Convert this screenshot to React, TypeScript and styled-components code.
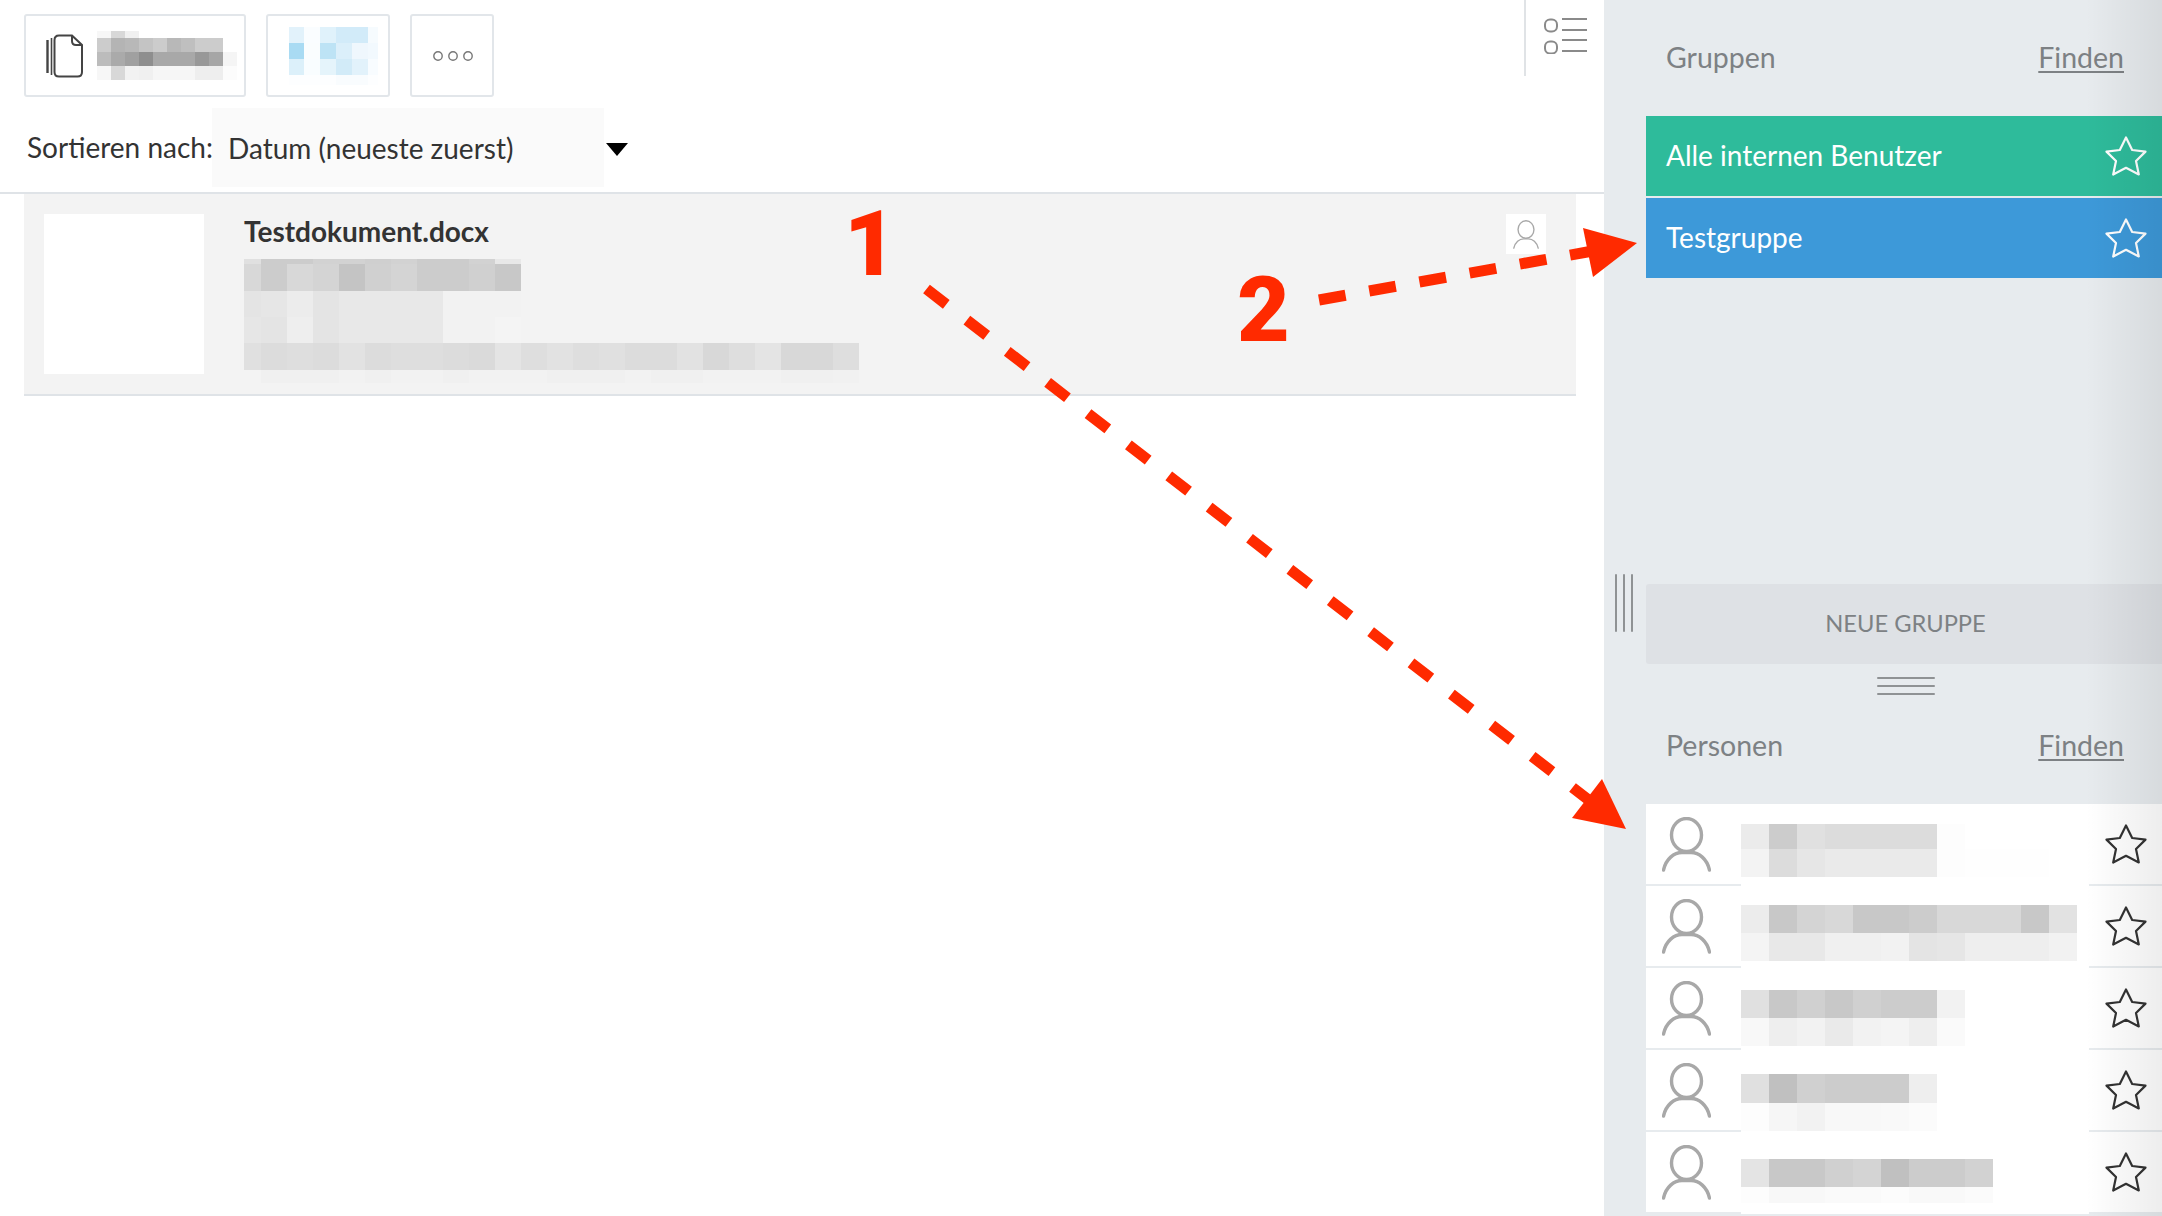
import styled, { createGlobalStyle } from "styled-components";

const GlobalStyle = createGlobalStyle`
  html, body {
    margin: 0;
    background: #fff;
    font-family: Lato, "Liberation Sans", sans-serif;
  }
`;

type MosaicData = {
  cols: string;
  rows: string;
  cells: string[][];
};

const docMosaic: MosaicData = {
  cols: "17px repeat(23, 26px)",
  rows: "5px 27px 26px 26px 27px 13px",
  cells: [
    ["e0", "cc", "cc", "d2", "d2", "cf", "d2", "cc", "cc", "d2", "e8"],
    ["d8", "cc", "d8", "d4", "c4", "d0", "d4", "cc", "cc", "d0", "c8"],
    ["e4", "e6", "ec", "e4", "e8", "e8", "e8", "e8", "f2", "f2", "f2"],
    ["e6", "e4", "ee", "e4", "e8", "e8", "e8", "e8", "f2", "f2", "f4"],
    ["e0", "dc", "de", "dc", "e2", "dc", "de", "de", "dc", "da", "e4", "de", "e2", "de", "e0", "dc", "dc", "e2", "d8", "de", "e4", "d8", "d8", "de"],
    ["f3", "f0", "f0", "f0", "f2", "f0", "f2", "f2", "f0", "f2", "f2", "f2", "f0", "f0", "f0", "f2", "f0", "f0", "f2", "f2", "f2", "f0", "f0", "f1"],
  ],
};

const copyMosaic: MosaicData = {
  cols: "repeat(10, 14px)",
  rows: "7px 14px 14px 14px",
  cells: [
    ["f7", "d8", "f0"],
    ["cc", "b4", "b8", "c4", "cc", "b8", "bf", "cc", "cc"],
    ["bc", "aa", "a0", "8e", "a8", "a8", "a8", "98", "a6", "f5"],
    ["f7", "d8", "f2", "f0", "f6", "f6", "f6", "ee", "ee", "fc"],
  ],
};

const shareMosaic: MosaicData = {
  cols: "15px 16px 16px 16px 16px 10px",
  rows: "16px 16px 16px 10px",
  cells: [
    ["#e2f2fb", "#fafdff", "#e0f2fb", "#d2ebf9", "#d2ebf9", "#f6fbfe"],
    ["#a9dbf3", "#fafdfe", "#bde3f5", "#dbeffa", "#eff7fd", "#f2f9fe"],
    ["#dcf0fa", "#f9fdff", "#e5f4fb", "#d2ebf8", "#e2f2fb", "#f8fcff"],
    ["#fdfeff", "#fdfeff", "#fdfeff", "#f9fcfe", "#f9fcfe", "#fdfeff"],
  ],
};

const people: { top: number; rows: string; cells: string[][] }[] = [
  {
    top: 20,
    rows: "25px 28px",
    cells: [
      ["eb", "cc", "e0", "dc", "dc", "dc", "dc", "fd"],
      ["f3", "dc", "e6", "ea", "ea", "ea", "ea", "fd", "fe", "fe", "fe"],
    ],
  },
  {
    top: 19,
    rows: "28px 28px",
    cells: [
      ["ec", "c8", "d4", "d8", "c8", "c8", "cc", "d8", "d8", "d8", "c8", "e2"],
      ["f4", "e8", "e8", "f0", "f0", "f2", "e4", "e6", "ee", "ee", "ee", "f2"],
    ],
  },
  {
    top: 22,
    rows: "28px 28px",
    cells: [
      ["e0", "c8", "d0", "c8", "d0", "cc", "cc", "f2"],
      ["f8", "ee", "f2", "ea", "f2", "f4", "ee", "fa"],
    ],
  },
  {
    top: 24,
    rows: "29px 28px",
    cells: [
      ["e0", "c0", "d0", "cc", "cc", "cc", "ee"],
      ["fd", "f6", "f2", "f8", "f8", "f9", "fb"],
    ],
  },
  {
    top: 27,
    rows: "28px 16px",
    cells: [
      ["e4", "c8", "c8", "d0", "d4", "c0", "cc", "cc", "d2"],
      ["fd", "f8", "f8", "fa", "fa", "fc", "f9", "f9", "fb"],
    ],
  },
];

const toColor = (c: string) => (c.startsWith("#") ? c : `#${c}${c}${c}`);

const Mosaic = ({ data }: { data: MosaicData }) => (
  <MosaicGrid $cols={data.cols} $rows={data.rows}>
    {data.cells.map((row, r) =>
      row.map((c, i) => (
        <MosaicCell key={`${r}-${i}`} $row={r + 1} $col={i + 1} $color={toColor(c)} />
      ))
    )}
  </MosaicGrid>
);

const StarIcon = ({ color }: { color: string }) => (
  <StarSvg viewBox="0 0 42 40" width="42" height="40">
    <path
      d="M21 1.5 L27.2 14 L40.5 15.6 L31 25 L33.8 38.5 L21 31.8 L8.2 38.5 L11 25 L1.5 15.6 L14.8 14 Z"
      fill="none"
      stroke={color}
      strokeWidth="2.2"
      strokeLinejoin="round"
    />
  </StarSvg>
);

const PersonIcon = ({ size, stroke }: { size: number; stroke: number }) => (
  <PersonSvg viewBox="0 0 49 55" width={size} height={(size * 55) / 49}>
    <ellipse cx="24.5" cy="18" rx="15" ry="16.5" fill="none" stroke="#a8a8a8" strokeWidth={stroke} />
    <path
      d="M1.5 53 C4 42 12 35.5 20 35.5 C22 35.5 27 35.5 29 35.5 C37 35.5 45 42 47.5 53"
      fill="none"
      stroke="#a8a8a8"
      strokeWidth={stroke}
      strokeLinecap="round"
    />
  </PersonSvg>
);

const App = () => {
  return (
    <Page>
      <GlobalStyle />
      <Main>
        <TopBar>
          <Buttons>
            <ToolButton $width={222} $pad={20}>
              <svg viewBox="0 0 37 44" width="37" height="44">
                <g fill="none" stroke="#444" strokeWidth="2">
                  <path d="M1.5 6 V39" strokeWidth="2.4" />
                  <path d="M5.5 4 V41" strokeWidth="1.6" />
                  <path d="M13 1.5 H26 L36 11 V38 Q36 42.5 31.5 42.5 H13 Q8.5 42.5 8.5 38 V6 Q8.5 1.5 13 1.5 Z" />
                  <path d="M26 1.5 V7 Q26 11 30 11 H36" />
                </g>
              </svg>
              <Mosaic data={copyMosaic} />
            </ToolButton>
            <ToolButton $width={124} $pad={21}>
              <Mosaic data={shareMosaic} />
            </ToolButton>
            <ToolButton $width={84} $pad={20}>
              <svg viewBox="0 0 42 12" width="42" height="12">
                <g fill="none" stroke="#777" strokeWidth="1.4">
                  <circle cx="6" cy="6" r="4.2" />
                  <circle cx="21" cy="6" r="4.2" />
                  <circle cx="36" cy="6" r="4.2" />
                </g>
              </svg>
            </ToolButton>
          </Buttons>
          <ViewToggle>
            <svg viewBox="0 0 44 36" width="44" height="36">
              <g fill="none" stroke="#8a8a8a" strokeWidth="2">
                <rect x="2" y="1.5" width="12" height="12" rx="5" />
                <rect x="2" y="23.5" width="12" height="12" rx="5" />
                <path d="M19 1 H44 M19 12 H44 M19 22 H44 M19 33 H44" />
              </g>
            </svg>
          </ViewToggle>
        </TopBar>
        <SortRow>
          <SortLabel>Sortieren nach:</SortLabel>
          <SortSelect>Datum (neueste zuerst)</SortSelect>
          <Caret />
        </SortRow>
        <DocumentList>
          <DocumentRow>
            <Thumb />
            <DocumentBody>
              <DocumentTitle>Testdokument.docx</DocumentTitle>
              <Mosaic data={docMosaic} />
            </DocumentBody>
            <OwnerBadge>
              <PersonIcon size={26} stroke={2.6} />
            </OwnerBadge>
          </DocumentRow>
        </DocumentList>
      </Main>

      <Sidebar>
        <GripColumn>
          <VerticalGrip>
            <span />
            <span />
            <span />
          </VerticalGrip>
        </GripColumn>
        <SidebarContent>
          <SectionHeader>
            <span>Gruppen</span>
            <FindLink>Finden</FindLink>
          </SectionHeader>
          <GroupList>
            <GroupRow $color="#2ebb9b">
              <span>Alle internen Benutzer</span>
              <StarIcon color="#fff" />
            </GroupRow>
            <GroupRow $color="#3d99d9">
              <span>Testgruppe</span>
              <StarIcon color="#fff" />
            </GroupRow>
          </GroupList>
          <NewGroup>NEUE GRUPPE</NewGroup>
          <HorizontalGrip>
            <span />
            <span />
            <span />
          </HorizontalGrip>
          <PeopleHeader>
            <span>Personen</span>
            <FindLink>Finden</FindLink>
          </PeopleHeader>
          {people.map((p, i) => (
            <PersonRow key={i}>
              <PersonIconBox>
                <PersonIcon size={49} stroke={3.4} />
              </PersonIconBox>
              <NamePatch $top={p.top}>
                <Mosaic data={{ cols: "repeat(12, 28px)", rows: p.rows, cells: p.cells }} />
              </NamePatch>
              <PersonStar>
                <StarIcon color="#333" />
              </PersonStar>
            </PersonRow>
          ))}
        </SidebarContent>
        <EdgeShade />
      </Sidebar>

      <Annotations viewBox="0 0 2162 1216" width="2162" height="1216">
        <line x1="926.5" y1="289" x2="1590" y2="801" stroke="#ff2a00" strokeWidth="11" strokeDasharray="25 26" />
        <polygon points="1626,829 1602,779 1572,818" fill="#ff2a00" />
        <line x1="1319" y1="300" x2="1590" y2="251.5" stroke="#ff2a00" strokeWidth="11" strokeDasharray="27 24" />
        <polygon points="1637,243 1583,228 1593,277" fill="#ff2a00" />
        <NumberLabel x="844" y="275">1</NumberLabel>
        <NumberLabel x="1237" y="341">2</NumberLabel>
      </Annotations>
    </Page>
  );
};

export default App;

const Page = styled.div`
  position: relative;
  display: flex;
  width: 2162px;
  height: 1216px;
  overflow: hidden;
`;

const Main = styled.div`
  width: 1604px;
  flex-shrink: 0;
  display: flex;
  flex-direction: column;
`;

const TopBar = styled.div`
  display: flex;
  justify-content: space-between;
  height: 108px;
`;

const Buttons = styled.div`
  display: flex;
  gap: 20px;
  padding: 14px 0 0 24px;
`;

const ToolButton = styled.div<{ $width: number; $pad: number }>`
  box-sizing: border-box;
  display: flex;
  align-items: center;
  gap: 14px;
  width: ${(p) => p.$width}px;
  height: 83px;
  padding-left: ${(p) => p.$pad}px;
  border: 2px solid #e2e6ea;
  border-radius: 3px;
`;

const ViewToggle = styled.div`
  box-sizing: border-box;
  width: 80px;
  height: 76px;
  padding: 18px 0 0 17px;
  border-left: 2px solid #e0e3e6;
`;

const SortRow = styled.div`
  display: flex;
  height: 84px;
  padding-left: 27px;
  border-bottom: 2px solid #dfe3e7;
`;

const SortLabel = styled.div`
  position: relative;
  z-index: 1;
  width: 185px;
  height: 79px;
  line-height: 79px;
  font-size: 28px;
  color: #333;
  white-space: nowrap;
`;

const SortSelect = styled.div`
  box-sizing: border-box;
  width: 392px;
  height: 79px;
  padding-left: 16px;
  line-height: 81px;
  font-size: 28px;
  color: #333;
  background: #fafafa;
`;

const Caret = styled.div`
  width: 0;
  height: 0;
  margin: 35px 0 0 2px;
  border-left: 11px solid transparent;
  border-right: 11px solid transparent;
  border-top: 13px solid #000;
`;

const DocumentList = styled.div`
  padding: 0 28px 0 24px;
`;

const DocumentRow = styled.div`
  box-sizing: border-box;
  display: flex;
  height: 202px;
  padding: 20px 30px 0 20px;
  background: #f3f3f3;
  border-bottom: 2px solid #dfe3e7;
`;

const Thumb = styled.div`
  width: 160px;
  height: 160px;
  background: #fff;
`;

const DocumentBody = styled.div`
  flex: 1;
  margin-left: 40px;
`;

const DocumentTitle = styled.div`
  height: 45px;
  line-height: 35px;
  font-size: 28px;
  font-weight: 700;
  color: #333;
`;

const OwnerBadge = styled.div`
  box-sizing: border-box;
  width: 40px;
  height: 40px;
  padding: 6px 0 0 7px;
  background: #fff;
`;

const MosaicGrid = styled.div<{ $cols: string; $rows: string }>`
  display: grid;
  grid-template-columns: ${(p) => p.$cols};
  grid-template-rows: ${(p) => p.$rows};
`;

const MosaicCell = styled.div<{ $row: number; $col: number; $color: string }>`
  grid-row: ${(p) => p.$row};
  grid-column: ${(p) => p.$col};
  background: ${(p) => p.$color};
`;

const Sidebar = styled.div`
  position: relative;
  flex: 1;
  display: flex;
  background: #e7ebee;
`;

const GripColumn = styled.div`
  width: 42px;
  flex-shrink: 0;
  display: flex;
  align-items: center;
  padding: 0 0 10px 11px;
  box-sizing: border-box;
`;

const VerticalGrip = styled.div`
  display: flex;
  gap: 6px;
  height: 58px;

  span {
    width: 2px;
    background: #8f9294;
    border-radius: 1px;
  }
`;

const SidebarContent = styled.div`
  flex: 1;
  min-width: 0;
  display: flex;
  flex-direction: column;
`;

const SectionHeader = styled.div`
  box-sizing: border-box;
  display: flex;
  align-items: center;
  justify-content: space-between;
  height: 116px;
  padding: 0 38px 3px 20px;
  font-size: 28.5px;
  color: #7d8184;
`;

const PeopleHeader = styled(SectionHeader)`
  height: 108px;
  padding-bottom: 10px;
`;

const FindLink = styled.span`
  text-decoration: underline;
  text-decoration-thickness: 2px;
  text-underline-offset: 3px;
`;

const GroupList = styled.div`
  height: 468px;
  display: flex;
  flex-direction: column;
  gap: 2px;
`;

const GroupRow = styled.div<{ $color: string }>`
  box-sizing: border-box;
  display: flex;
  align-items: center;
  justify-content: space-between;
  height: 80px;
  padding: 0 15px 0 20px;
  background: ${(p) => p.$color};
  color: #fff;
  font-size: 28px;

  span {
    margin-bottom: 3px;
  }
`;

const NewGroup = styled.div`
  height: 80px;
  padding-left: 3px;
  line-height: 78px;
  text-align: center;
  font-size: 23.7px;
  color: #7d8184;
  background: #dee1e5;
  border-radius: 3px 0 0 3px;
`;

const HorizontalGrip = styled.div`
  display: flex;
  flex-direction: column;
  align-items: center;
  gap: 6px;
  padding: 13px 0 0 3px;
  height: 19px;

  span {
    width: 58px;
    height: 2px;
    background: #8f9294;
    border-radius: 1px;
  }
`;

const PersonRow = styled.div`
  display: flex;
  height: 80px;
  margin-bottom: 2px;
  background: #fff;
`;

const PersonIconBox = styled.div`
  width: 95px;
  padding: 13px 0 0 16px;
  box-sizing: border-box;
`;

const NamePatch = styled.div<{ $top: number }>`
  box-sizing: border-box;
  width: 348px;
  height: 80px;
  padding-top: ${(p) => p.$top}px;
  background: #fff;
  box-shadow: 0 2px 0 #fff;
`;

const PersonStar = styled.div`
  padding: 20px 0 0 16px;
`;

const StarSvg = styled.svg`
  display: block;
  flex-shrink: 0;
`;

const PersonSvg = styled.svg`
  display: block;
  filter: blur(0.7px);
`;

const EdgeShade = styled.div`
  position: absolute;
  top: 0;
  right: 0;
  bottom: 0;
  width: 76px;
  background: linear-gradient(to right, rgba(0, 0, 0, 0), rgba(0, 0, 0, 0.07));
  pointer-events: none;
`;

const Annotations = styled.svg`
  position: absolute;
  top: 0;
  left: 0;
  pointer-events: none;
`;

const NumberLabel = styled.text`
  font-family: Roboto, "Liberation Sans", sans-serif;
  font-size: 91px;
  font-weight: 900;
  fill: #ff2a00;
`;
